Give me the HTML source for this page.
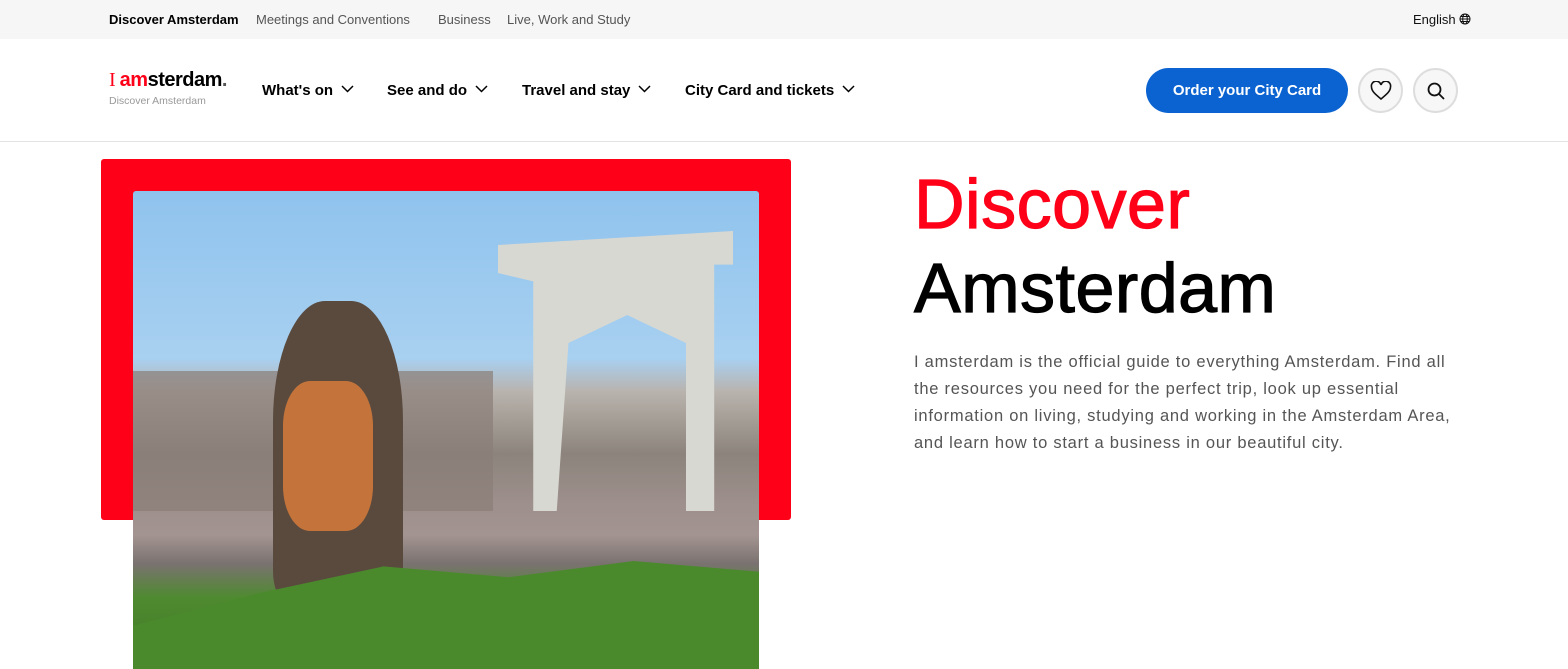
<!DOCTYPE html>
<html><head><meta charset="utf-8"><style>
*{margin:0;padding:0;box-sizing:border-box}
body{width:1568px;height:669px;overflow:hidden;background:#fff;font-family:"Liberation Sans",sans-serif;color:#000;position:relative}
.top{position:absolute;left:0;top:0;width:1568px;height:39px;background:#f6f6f6;font-size:13px;color:#555}
.top span{position:absolute;top:12px}
.hdr{position:absolute;top:39px;left:0;width:1568px;height:103px;border-bottom:1px solid #e4e4e4}
.nav{position:absolute;top:43px;font-size:15px;font-weight:bold}
.nav svg{margin-left:8px;vertical-align:2px}
.btn{position:absolute;left:1146px;top:29px;width:202px;height:45px;border-radius:23px;background:#0b63d1;color:#fff;font-weight:bold;font-size:15px;text-align:center;line-height:45px}
.circ{position:absolute;top:29px;width:45px;height:45px;border-radius:50%;border:2px solid #ddd;background:#f7f7f7;display:flex;align-items:center;justify-content:center}
.red{position:absolute;left:101px;top:159px;width:690px;height:361px;background:#ff0019;border-radius:3px}
.photo{position:absolute;left:133px;top:191px;width:626px;height:478px;overflow:hidden;border-radius:3px 3px 0 0;
background:linear-gradient(180deg,#8fc3ee 0%,#a8d0f0 35%,#b9b3ad 42%,#8c847c 55%,#9d8f8c 65%,#a39491 72%,#7a7270 78%,#4f8a30 85%,#3f7a25 100%)}
h1{position:absolute;left:914px;font-size:70px;font-weight:normal;letter-spacing:0.5px;-webkit-text-stroke:1.2px currentColor}
p{position:absolute;left:914px;top:349px;width:560px;font-size:16.5px;line-height:27px;color:#555;letter-spacing:0.75px;white-space:nowrap}
</style></head><body>
<div class="top">
<span style="left:109px;color:#000;font-weight:bold">Discover Amsterdam</span>
<span style="left:256px">Meetings and Conventions</span>
<span style="left:438px">Business</span>
<span style="left:507px">Live, Work and Study</span>
<span style="left:1413px;color:#111">English <svg width="12" height="12" viewBox="0 0 12 12" style="vertical-align:-1px" fill="none" stroke="#111" stroke-width="1"><circle cx="6" cy="6" r="5"/><ellipse cx="6" cy="6" rx="2.3" ry="5"/><path d="M1 6h10M2 3.5h8M2 8.5h8"/></svg></span>
</div>
<div class="hdr">
<div style="position:absolute;left:109px;top:30px;font-size:20px;font-weight:bold;letter-spacing:-0.5px"><span style="color:#ff0019;font-family:'Liberation Serif',serif;font-weight:normal">I </span><span style="color:#ff0019">am</span>sterdam<span style="color:#555">.</span></div>
<div style="position:absolute;left:109px;top:56px;font-size:10.5px;color:#999">Discover Amsterdam</div>
<div class="nav" style="left:262px">What's on<svg width="13" height="8" viewBox="0 0 13 8"><path d="M1 1l5.5 5.5L12 1" fill="none" stroke="#000" stroke-width="1.5"/></svg></div>
<div class="nav" style="left:387px">See and do<svg width="13" height="8" viewBox="0 0 13 8"><path d="M1 1l5.5 5.5L12 1" fill="none" stroke="#000" stroke-width="1.5"/></svg></div>
<div class="nav" style="left:522px">Travel and stay<svg width="13" height="8" viewBox="0 0 13 8"><path d="M1 1l5.5 5.5L12 1" fill="none" stroke="#000" stroke-width="1.5"/></svg></div>
<div class="nav" style="left:685px">City Card and tickets<svg width="13" height="8" viewBox="0 0 13 8"><path d="M1 1l5.5 5.5L12 1" fill="none" stroke="#000" stroke-width="1.5"/></svg></div>
<div class="btn">Order your City Card</div>
<div class="circ" style="left:1358px"><svg width="22" height="20" viewBox="0 0 22 20"><path d="M11 18C5 13 1.5 10 1.5 6A4.5 4.5 0 0 1 11 4a4.5 4.5 0 0 1 9.5 2c0 4-3.5 7-9.5 12z" fill="none" stroke="#111" stroke-width="1.6"/></svg></div>
<div class="circ" style="left:1413px"><svg width="20" height="20" viewBox="0 0 20 20"><circle cx="8.5" cy="8.5" r="6" fill="none" stroke="#111" stroke-width="1.8"/><path d="M13 13l5 5" stroke="#111" stroke-width="1.8"/></svg></div>
</div>
<div class="red"></div>
<div class="photo">
<div style="position:absolute;left:365px;top:40px;width:235px;height:280px;background:#d8d8d2;clip-path:polygon(0 5%,100% 0,100% 12%,92% 12%,92% 100%,80% 100%,80% 40%,55% 30%,30% 40%,25% 100%,15% 100%,15% 18%,0 15%)"></div>
<div style="position:absolute;left:0;top:180px;width:360px;height:140px;background:#8a7d78;opacity:.7"></div>
<div style="position:absolute;left:140px;top:110px;width:130px;height:300px;background:#5a4a3e;border-radius:40% 40% 10% 10%"></div>
<div style="position:absolute;left:150px;top:190px;width:90px;height:150px;background:#c4743a;border-radius:30%"></div>
<div style="position:absolute;left:0;top:370px;width:626px;height:108px;background:#4a8a2c;clip-path:polygon(0 60%,20% 30%,40% 5%,60% 15%,80% 0,100% 10%,100% 100%,0 100%)"></div>
</div>
<h1 style="top:164px;color:#ff0019">Discover</h1>
<h1 style="top:248px">Amsterdam</h1>
<p>I amsterdam is the official guide to everything Amsterdam. Find all<br>the resources you need for the perfect trip, look up essential<br>information on living, studying and working in the Amsterdam Area,<br>and learn how to start a business in our beautiful city.</p>
</body></html>
